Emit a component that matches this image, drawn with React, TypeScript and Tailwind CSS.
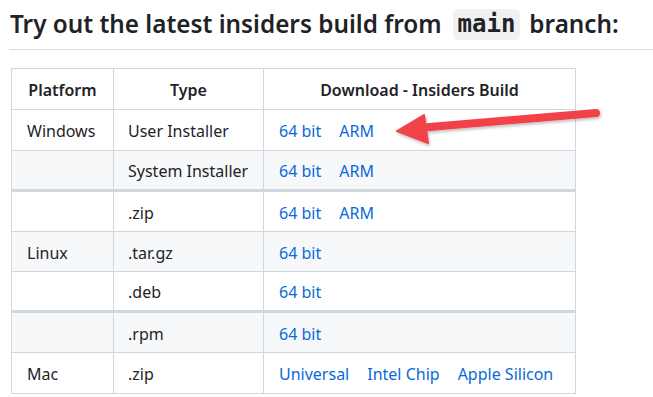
import React from 'react'

type Row = {
  platform: string
  type: string
  links: string[]
  bg: string
  h: string
  thick?: boolean
}

const rows: Row[] = [
  { platform: "Windows", type: "User Installer", links: ["64 bit", "ARM"], bg: "bg-white", h: "h-[41px]" },
  { platform: "", type: "System Installer", links: ["64 bit", "ARM"], bg: "bg-[#f6f8fa]", h: "h-[40px]" },
  { platform: "", type: ".zip", links: ["64 bit", "ARM"], bg: "bg-white", h: "h-[41px]", thick: true },
  { platform: "Linux", type: ".tar.gz", links: ["64 bit"], bg: "bg-[#f6f8fa]", h: "h-[40px]" },
  { platform: "", type: ".deb", links: ["64 bit"], bg: "bg-white", h: "h-[40px]" },
  { platform: "", type: ".rpm", links: ["64 bit"], bg: "bg-[#f6f8fa]", h: "h-[41px]", thick: true },
  { platform: "Mac", type: ".zip", links: ["Universal", "Intel Chip", "Apple Silicon"], bg: "bg-white", h: "h-[41px]" },
]

const App = () => {
  return (
    <div className="relative min-h-screen bg-white pl-[9px] pt-[6px] text-[#1f2328]" style={{ fontFamily: '"Noto Sans", "Liberation Sans", sans-serif' }}>
      <h2 className="flex items-center text-[24.3px] font-semibold leading-[36px] pb-[7px] border-b border-[#d8dee4] pl-[1px]">
        Try out the latest insiders build from
        <code className="ml-[11px] mr-[9px] px-[5px] rounded-[6px] bg-[#eff1f3] text-[24px] font-bold leading-[31px]" style={{ fontFamily: '"DejaVu Sans Mono", "Liberation Mono", monospace' }}>main</code>
        branch:
      </h2>

      <table className="mt-[18px] ml-[2px] border-collapse text-[16px] leading-[24px]">
        <thead>
          <tr className="bg-white">
            <th className="w-[102px] h-[41px] pt-[2px] border border-[#d0d7de] font-semibold text-center">Platform</th>
            <th className="w-[150px] h-[41px] pt-[2px] border border-[#d0d7de] font-semibold text-center">Type</th>
            <th className="w-[312px] h-[41px] pt-[2px] border border-[#d0d7de] font-semibold text-center">Download - Insiders Build</th>
          </tr>
        </thead>
        <tbody>
          {rows.map((r, i) => (
            <tr key={i} className={`${r.bg} ${r.thick ? "border-t-[3px] border-[#d0d7de]" : ""}`}>
              <td className={`${r.h} pt-[2px] border border-[#d0d7de] px-[15px] ${r.thick ? "border-t-[3px]" : ""}`}>{r.platform}</td>
              <td className={`${r.h} pt-[2px] border border-[#d0d7de] px-[14px] ${r.thick ? "border-t-[3px]" : ""}`}>{r.type}</td>
              <td className={`${r.h} pt-[2px] border border-[#d0d7de] px-[15px] ${r.thick ? "border-t-[3px]" : ""}`}>
                <div className="flex gap-[18px]">
                  {r.links.map((l) => (
                    <a key={l} href="#" className="text-[#0969da]">{l}</a>
                  ))}
                </div>
              </td>
            </tr>
          ))}
        </tbody>
      </table>

      <svg className="absolute left-0 top-0 pointer-events-none" width="653" height="397" viewBox="0 0 653 397">
        <defs>
          <filter id="sh" x="-10%" y="-50%" width="120%" height="200%">
            <feDropShadow dx="1" dy="2" stdDeviation="1.5" floodColor="#000" floodOpacity="0.25" />
          </filter>
        </defs>
        <g filter="url(#sh)" fill="#f2434a" stroke="#f2434a" strokeLinejoin="round">
          <line x1="596" y1="113" x2="418" y2="128" strokeWidth="8" strokeLinecap="round" />
          <polygon points="397,131 424,115 428,143" strokeWidth="2" />
        </g>
      </svg>
    </div>
  )
}

export default App
